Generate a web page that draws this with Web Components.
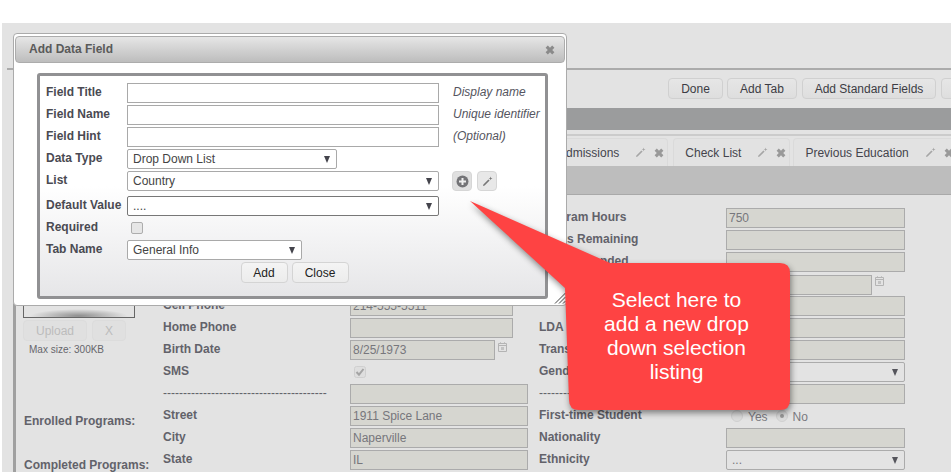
<!DOCTYPE html>
<html><head><meta charset="utf-8"><title>Add Data Field</title>
<style>html,body{margin:0;padding:0;background:#fff;font-family:"Liberation Sans",Arial,sans-serif}</style></head>
<body>
<app-shell></app-shell>
<script>
const PENCIL='<svg width="11" height="11" viewBox="0 0 11 11" style="display:block"><path d="M1 10 L1.4 8.4 L6.4 3.4 L7.6 4.6 L2.6 9.6 Z" fill="currentColor"/><path d="M8.6 0.5 L9.1 1.9 L10.5 2.4 L9.1 2.9 L8.6 4.3 L8.1 2.9 L6.7 2.4 L8.1 1.9 Z" fill="currentColor"/></svg>';
const CROSS='<svg width="10" height="10" viewBox="0 0 10 10" style="display:block"><path d="M0.6 2.8 L2.8 0.6 L5 2.8 L7.2 0.6 L9.4 2.8 L7.2 5 L9.4 7.2 L7.2 9.4 L5 7.2 L2.8 9.4 L0.6 7.2 L2.8 5 Z" fill="currentColor"/></svg>';
const CAL='<svg width="9" height="10" viewBox="0 0 9 10" style="display:block"><path d="M.5 1.5h8v8h-8z M.5 3.5h8" fill="none" stroke="currentColor"/><path d="M2 0h1v2H2z M6 0h1v2H6z M3 5h3v3H3z" fill="currentColor" opacity=".7"/></svg>';
function def(name,css,html,extra){
  customElements.define(name,class extends HTMLElement{
    constructor(){super();const r=this.attachShadow({mode:'open'});
      r.innerHTML='<style>'+css+'</style>'+(typeof html==='function'?html(this):html);}
    connectedCallback(){ if(extra) extra(this); }
  });
}
def('icon-pencil',':host{display:inline-block;width:11px;height:11px;color:#a6a6a6}',PENCIL);
def('icon-cross',':host{display:inline-block;width:10px;height:10px;color:#999}',CROSS);
def('icon-cal',':host{display:inline-block;width:9px;height:10px;color:#b4b4b4}',CAL);

def('tool-btn',`:host{display:inline-flex;align-items:center;justify-content:center;box-sizing:border-box;height:21px;padding:0 12px;border:1px solid #d0d0d0;border-radius:4px;background:linear-gradient(#e6e6e6,#dedede);font:12px "Liberation Sans",sans-serif;color:#3c3c44;flex:none}
:host([faded]){color:#bcbcbc;background:#e0e0e0;border-color:#dcdcdc}
:host([light]){background:linear-gradient(#f4f4f4,#ececec);border-color:#d4d4d4;color:#222}`,'<slot></slot>');

def('app-tab',`:host{display:flex;align-items:center;box-sizing:border-box;height:28px;padding:0 3px 0 11px;flex:none;border:1px solid #dadada;border-bottom:0;border-radius:4px 4px 0 0;background:#e2e2e2;font:12px "Liberation Sans",sans-serif;color:#44444c}
.l{margin-right:16px}.p{margin-right:8px}`,
'<span class="l"><slot></slot></span><icon-pencil class="p"></icon-pencil><icon-cross></icon-cross>');

def('x-input',`:host{display:flex;align-items:center;box-sizing:border-box;height:20px;width:var(--w,179px);padding:0 2px;border:1px solid #ababab;background:#d6d6d0;font:12px "Liberation Sans",sans-serif;color:#77777c;white-space:nowrap;overflow:hidden;flex:none}`,'<slot></slot>');

def('x-select',`:host{display:flex;align-items:center;justify-content:space-between;box-sizing:border-box;height:20px;width:var(--w,179px);padding:0 5px;border:1px solid var(--bc,#ababab);border-radius:2px;background:var(--bg,#e3e3e3);font:12px "Liberation Sans",sans-serif;color:var(--fc,#77777c);white-space:nowrap;flex:none}
i{width:0;height:0;border-left:3.5px solid transparent;border-right:3.5px solid transparent;border-top:7px solid var(--ac,#55555c);margin-right:1px;margin-left:4px}`,'<span><slot></slot></span><i></i>');

def('form-row',`:host{display:grid;grid-template-columns:187px 189px 187px 1fr;grid-template-rows:20px;height:20px;margin-bottom:2px;align-items:center;font:bold 12px "Liberation Sans",sans-serif;color:#62626a}
.c{display:flex;align-items:center;gap:7px;height:20px}
.lb{padding-bottom:3px;white-space:nowrap}`,
'<div class="lb"><slot name="l1"></slot></div><div class="c"><slot name="v1"></slot></div><div class="lb"><slot name="l2"></slot></div><div class="c"><slot name="v2"></slot></div>');

def('radio-dot',`:host{display:inline-block;box-sizing:border-box;width:12px;height:12px;border-radius:50%;border:1px solid #d0d0d0;background:#dcdcdc;flex:none}
:host([on]) b{display:block}
b{display:none;width:4px;height:4px;border-radius:50%;background:#9a9a9a;margin:3px}`,'<b></b>');

def('dlg-row',`:host{display:grid;grid-template-columns:81px 326px 1fr;grid-template-rows:20px;align-items:center;height:20px;margin-bottom:2px;font:12px "Liberation Sans",sans-serif}
:host([gap]){margin-top:5px}
.l{font-weight:bold;color:#4a4a52;padding-bottom:2px;white-space:nowrap}
.h{font-style:italic;color:#555560;padding-bottom:2px;white-space:nowrap}
.v{display:flex;align-items:center}`,
'<div class="l"><slot name="label"></slot></div><div class="v"><slot name="field"></slot></div><div class="h"><slot name="hint"></slot></div>');

def('dlg-input',`:host{display:block;box-sizing:border-box;height:20px;width:312px;background:#fff;border:1px solid #a9a9a9}`,'');

def('icon-btn',`:host{display:inline-flex;align-items:center;justify-content:center;box-sizing:border-box;width:20px;height:20px;border:1px solid #d6d6d6;border-radius:4px;background:#e8e8e8;color:#777}`,'<slot></slot>');

def('add-dialog',`:host{position:absolute;left:13px;top:33px;width:554px;height:273px;box-sizing:border-box;background:#fff;border:1px solid #ababab;border-radius:4px;padding:2px 1px 0;display:block;z-index:5;font-family:"Liberation Sans",sans-serif}
.bar{display:flex;align-items:center;justify-content:space-between;box-sizing:border-box;height:27px;padding:0 9px 2px 13px;border:1px solid #acacac;border-radius:4px;background:linear-gradient(#e6e6e6,#bdbdbd);font:bold 12px "Liberation Sans",sans-serif;color:#5a5a5a}
.bar icon-cross{color:#8a8a8a;margin-top:2px}
.box{box-sizing:border-box;width:511px;height:226px;margin:10px 0 0 22px;padding:7px 6px 0;border:3px solid #919193;border-radius:3px;background:linear-gradient(#fff 0,#fff 50%,#e6e6e8 100%)}
.acts{display:flex;justify-content:center;gap:4px;margin-left:-6px;width:500px;padding-left:9px;box-sizing:border-box}
.grip{position:absolute;right:0;bottom:1px;width:12px;height:12px}
.sq{box-sizing:border-box;width:12px;height:12px;margin-left:4px;border:1px solid #adadad;border-radius:2px;background:#e6e6e6;margin-top:-1px}`,
`<div class="bar"><span>Add Data Field</span><icon-cross></icon-cross></div>
<div class="box">
<dlg-row><span slot="label">Field Title</span><dlg-input slot="field"></dlg-input><span slot="hint">Display name</span></dlg-row>
<dlg-row><span slot="label">Field Name</span><dlg-input slot="field"></dlg-input><span slot="hint">Unique identifier</span></dlg-row>
<dlg-row><span slot="label">Field Hint</span><dlg-input slot="field"></dlg-input><span slot="hint">(Optional)</span></dlg-row>
<dlg-row><span slot="label">Data Type</span><x-select slot="field" style="--w:210px;--bc:#a9a9a9;--bg:#fff;--fc:#444;--ac:#44444c">Drop Down List</x-select></dlg-row>
<dlg-row><span slot="label">List</span><x-select slot="field" style="--w:312px;--bc:#a9a9a9;--bg:#fff;--fc:#444;--ac:#44444c">Country</x-select><span slot="hint" style="display:flex;gap:5px;margin:1px 0 -1px -1px"><icon-btn style="background:#e0e0e0"><svg width="13" height="13" viewBox="0 0 13 13" style="display:block"><circle cx="6.5" cy="6.5" r="6" fill="#747477"/><path d="M5.5 3h2v2.5H10v2H7.5V10h-2V7.5H3v-2h2.5z" fill="#eee"/></svg></icon-btn><icon-btn>${PENCIL}</icon-btn></span></dlg-row>
<dlg-row gap><span slot="label">Default Value</span><x-select slot="field" style="--w:312px;--bc:#777;--bg:#fff;--fc:#444;--ac:#44444c">....</x-select></dlg-row>
<dlg-row><span slot="label">Required</span><div slot="field" class="sq"></div></dlg-row>
<dlg-row><span slot="label">Tab Name</span><x-select slot="field" style="--w:175px;--bc:#a9a9a9;--bg:#fff;--fc:#444;--ac:#44444c">General Info</x-select></dlg-row>
<div class="acts"><tool-btn light style="width:47px">Add</tool-btn><tool-btn light style="width:57px">Close</tool-btn></div>
</div>
<svg class="grip" viewBox="0 0 12 12"><path d="M1 11.5L11.5 1M5 11.5L11.5 5M9 11.5L11.5 9" stroke="#444" stroke-width="1" fill="none"/></svg>`);

def('call-out',`:host{position:absolute;left:469px;top:200px;width:340px;height:230px;z-index:9;display:block;font-family:"Liberation Sans",sans-serif}
svg{position:absolute;left:0;top:0;filter:drop-shadow(1px 3px 3px rgba(0,0,0,.45))}
.t{position:absolute;left:95px;top:63px;width:225px;height:147px;box-sizing:border-box;padding-top:25px;text-align:center;color:#fff;font-size:21px;line-height:24px}`,
`<svg width="340" height="230" viewBox="0 0 340 230"><path d="M1 1 L141 63 L311 63 Q321 63 321 73 L321 200 Q321 210 311 210 L110 210 Q100 210 100 200 L96 88 Z" fill="#fe4343"/></svg>
<div class="t"><slot></slot></div>`);

def('app-shell',`:host{display:block;position:relative;width:951px;height:472px;overflow:hidden;background:#fff;font-family:"Liberation Sans",sans-serif}
.bg{margin:23px 0 0 2px;height:449px;background:#e3e3e3;overflow:hidden}
.head{height:45px;margin-left:5px;border-bottom:2px solid #ababab;box-sizing:content-box}
.main{margin-left:11px;border-left:3px solid #a0a0a0;height:402px;overflow:hidden}
.tools{display:flex;gap:4px;padding:8px 0 0 652px;height:21px;white-space:nowrap}
.tools tool-btn{padding:0}
.bar1{height:22px;margin-top:9px;background:#9b9c9d}
.rule{height:4px;border-bottom:2px solid #cbcbcb;margin-bottom:2px}
.tabs{display:flex;gap:3px;margin-left:530px;width:600px}
.band{height:28px;background:#bdbdbd;border-bottom:1px solid #a9a9a9}
.form{display:grid;grid-template-columns:147px 1fr;padding-top:13px}
.left{display:flex;flex-direction:column;padding-left:7px;font:12px "Liberation Sans",sans-serif;color:#62626a}
.photo{box-sizing:border-box;width:112px;height:110px;border:1px solid #666;overflow:hidden;position:relative}
.photo:after{content:"";position:absolute;left:6px;right:6px;bottom:-6px;height:14px;background:radial-gradient(ellipse at center,rgba(120,120,120,.8),rgba(200,200,200,0) 70%)}
.btns{display:flex;gap:5px;margin-top:2px}
.max{font-size:10px;margin:3px 0 0 6px;color:#66666c}
.lbl{font-weight:bold;white-space:nowrap;margin-left:1px}`,
`<div class="bg">
<div class="head"></div>
<div class="main">
 <div class="tools"><tool-btn style="width:55px">Done</tool-btn><tool-btn style="width:70px">Add Tab</tool-btn><tool-btn style="width:134px;margin-left:1px">Add Standard Fields</tool-btn><tool-btn style="width:40px;margin-left:1px"></tool-btn></div>
 <div class="bar1"></div><div class="rule"></div>
 <div class="tabs"><app-tab style="margin-right:2px">Admissions</app-tab><app-tab>Check List</app-tab><app-tab>Previous Education</app-tab></div>
 <div class="band"></div>
 <div class="form">
  <div class="left">
   <div class="photo"></div>
   <div class="btns"><tool-btn faded style="width:64px">Upload</tool-btn><tool-btn faded style="width:34px">X</tool-btn></div>
   <div class="max">Max size: 300KB</div>
   <div class="lbl" style="margin-top:59px">Enrolled Programs:</div>
   <div class="lbl" style="margin-top:30px">Completed Programs:</div>
  </div>
  <div>
   <form-row><span slot="l2">Program Hours</span><x-input slot="v2">750</x-input></form-row>
   <form-row><span slot="l2">Hours Remaining</span><x-input slot="v2"></x-input></form-row>
   <form-row><span slot="l2">Hours Attended</span><x-input slot="v2"></x-input></form-row>
   <form-row style="position:relative;top:1px"><x-input slot="v2" style="--w:146px"></x-input><icon-cal slot="v2" style="margin:-8px 0 0 -4px"></icon-cal></form-row>
   <form-row><span slot="l1">Cell Phone</span><x-input slot="v1" style="--w:163px">214-555-5511</x-input><x-input slot="v2"></x-input></form-row>
   <form-row><span slot="l1">Home Phone</span><x-input slot="v1" style="--w:163px"></x-input><span slot="l2">LDA</span><x-input slot="v2"></x-input></form-row>
   <form-row><span slot="l1">Birth Date</span><x-input slot="v1" style="--w:145px">8/25/1973</x-input><icon-cal slot="v1" style="margin:-6px 0 0 -4px"></icon-cal><span slot="l2">Transfer</span><x-input slot="v2"></x-input></form-row>
   <form-row><span slot="l1">SMS</span><svg slot="v1" width="12" height="12" viewBox="0 0 12 12" style="margin-left:4px"><rect x=".5" y=".5" width="11" height="11" rx="2" fill="#dedede" stroke="#cfcfcf"/><path d="M2.5 6l2.5 2.7L9.5 3" fill="none" stroke="#a4a4a4" stroke-width="2"/></svg><span slot="l2">Gender</span><x-select slot="v2"></x-select></form-row>
   <form-row><span slot="l1" style="font-weight:normal">-----------------------------------------</span><x-input slot="v1" style="--w:178px"></x-input><span slot="l2" style="font-weight:normal">---------</span><x-input slot="v2"></x-input></form-row>
   <form-row><span slot="l1">Street</span><x-input slot="v1" style="--w:178px">1911 Spice Lane</x-input><span slot="l2">First-time Student</span><span slot="v2" style="display:flex;align-items:center;gap:5px;font:12px 'Liberation Sans',sans-serif;color:#7a7a80;margin-left:5px"><radio-dot></radio-dot><span style="margin-right:3px;padding-top:2px">Yes</span><radio-dot on></radio-dot><span style="padding-top:2px">No</span></span></form-row>
   <form-row><span slot="l1">City</span><x-input slot="v1" style="--w:178px">Naperville</x-input><span slot="l2">Nationality</span><x-input slot="v2"></x-input></form-row>
   <form-row><span slot="l1">State</span><x-input slot="v1" style="--w:178px">IL</x-input><span slot="l2">Ethnicity</span><x-select slot="v2">...</x-select></form-row>
  </div>
 </div>
</div>
</div>
<add-dialog></add-dialog>
<call-out>Select here to<br>add a new drop<br>down selection<br>listing</call-out>`);
</script>
</body></html>
